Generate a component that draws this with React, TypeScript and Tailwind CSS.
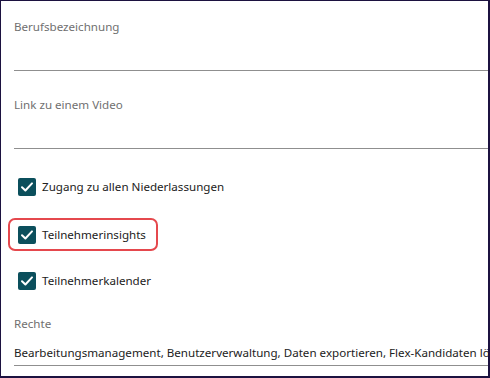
import React from "react";

function Check() {
  return (
    <span className="w-[18px] h-[18px] rounded-[2px] bg-[#0b4f5c] flex items-center justify-center shrink-0">
      <svg width="14" height="14" viewBox="0 0 14 14" fill="none">
        <path d="M2 7.2 L5.4 10.5 L12 3.4" stroke="white" strokeWidth="2" strokeLinecap="round" strokeLinejoin="round" />
      </svg>
    </span>
  );
}

export default function App() {
  return (
    <div
      className="w-[490px] h-[378px] bg-white border-l border-t border-r-2 border-b-2 border-[#1c1240] overflow-hidden text-[11.6px]"
      style={{ fontFamily: '"Noto Sans", "Open Sans", sans-serif' }}
    >
      <div className="pl-[13px] flex flex-col">
        <div className="mt-[17px] h-[18px] leading-[18px] text-[#707070]">Berufsbezeichnung</div>
        <div className="h-[35px] border-b border-[#8f8f8f]" />
        <div className="mt-[25px] h-[18px] leading-[18px] text-[#707070]">Link zu einem Video</div>
        <div className="h-[35px] border-b border-[#8f8f8f]" />
        <div className="mt-[29px] h-[18px] flex items-center gap-[6px] pl-[4px] text-[#222]">
          <Check />
          <span className="leading-[18px]">Zugang zu allen Niederlassungen</span>
        </div>
        <div className="mt-[22px] -ml-[6px] w-[150px] h-[33px] border-2 border-[#e5484d] rounded-[7px] flex items-center gap-[6px] pl-[8px] text-[#222]">
          <Check />
          <span className="leading-[18px]">Teilnehmerinsights</span>
        </div>
        <div className="mt-[21px] h-[18px] flex items-center gap-[6px] pl-[4px] text-[#222]">
          <Check />
          <span className="leading-[18px]">Teilnehmerkalender</span>
        </div>
        <div className="mt-[25px] h-[18px] leading-[18px] text-[#707070]">Rechte</div>
        <div className="mt-[11px] h-[22px] leading-[18px] pb-[3px] border-b border-[#8f8f8f] whitespace-nowrap overflow-hidden text-[#222]">
          Bearbeitungsmanagement, Benutzerverwaltung, Daten exportieren, Flex-Kandidaten löschen
        </div>
      </div>
    </div>
  );
}
